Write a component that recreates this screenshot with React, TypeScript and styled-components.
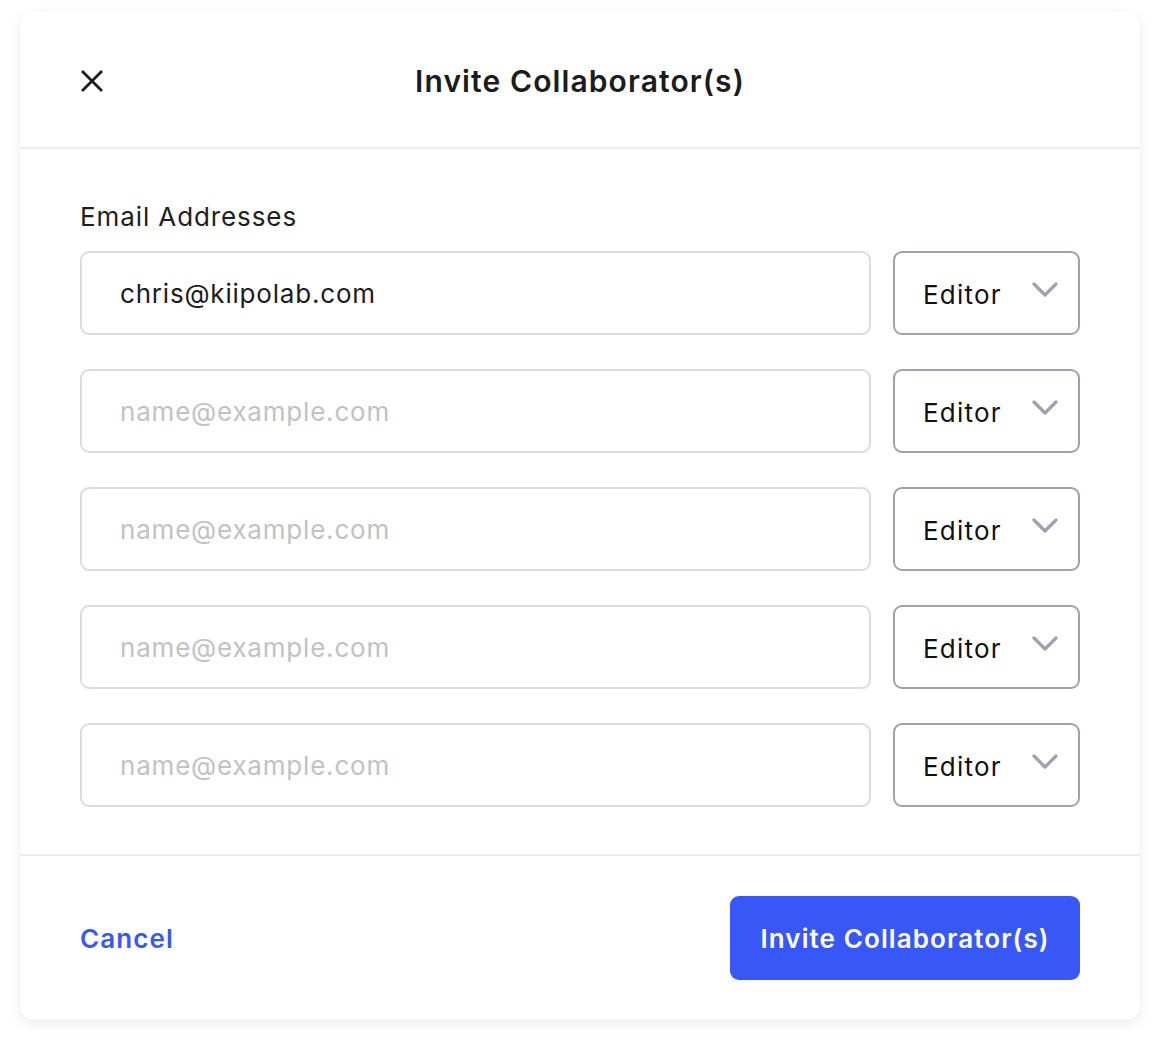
import React from "react";
import styled, { createGlobalStyle } from "styled-components";

const GlobalStyle = createGlobalStyle`
  html, body {
    margin: 0;
    padding: 0;
    background: #ffffff;
    font-family: "Inter", "Noto Sans", sans-serif;
  }
  * { box-sizing: border-box; }
`;

const Page = styled.div`
  width: 1160px;
  padding: 12px 20px 28px 20px;
`;

const Modal = styled.div`
  width: 1120px;
  background: #fff;
  border-radius: 14px;
  box-shadow: 0 4px 14px rgba(0, 0, 0, 0.07), 0 0 2px rgba(0, 0, 0, 0.04);
  display: flex;
  flex-direction: column;
`;

const Header = styled.div`
  height: 137px;
  display: flex;
  align-items: center;
  justify-content: center;
  position: relative;
  border-bottom: 2px solid #ececec;
`;

const CloseButton = styled.button`
  position: absolute;
  left: 60px;
  top: 57px;
  width: 24px;
  height: 24px;
  padding: 0;
  border: none;
  background: none;
  cursor: pointer;
  display: flex;
  align-items: center;
  justify-content: center;
`;

const Title = styled.h1`
  margin: 0 0 -2px 0;
  font-size: 30px;
  font-weight: 600;
  color: #1c1c1c;
  letter-spacing: 1.1px;
`;

const Body = styled.div`
  padding: 52px 60px 47px 60px;
  display: flex;
  flex-direction: column;
  border-bottom: 2px solid #ececec;
`;

const Label = styled.label`
  font-size: 26px;
  color: #1e1e1e;
  line-height: 32px;
  letter-spacing: 0.9px;
  margin-bottom: 18px;
`;

const Rows = styled.div`
  display: flex;
  flex-direction: column;
  gap: 34px;
`;

const Row = styled.div`
  display: flex;
  gap: 22px;
`;

const EmailInput = styled.input`
  width: 791px;
  height: 84px;
  border: 2px solid #dcdcdc;
  border-radius: 9px;
  padding: 0 38px;
  font-family: inherit;
  font-size: 26px;
  letter-spacing: 0.8px;
  color: #1c1c1c;
  outline: none;

  &::placeholder {
    color: #c2c2c2;
  }
`;

const RoleSelect = styled.button`
  width: 187px;
  height: 84px;
  border: 2px solid #a19fb0;
  border-radius: 9px;
  background: #fff;
  padding: 0 20px 0 28px;
  display: flex;
  align-items: center;
  justify-content: space-between;
  font-family: inherit;
  font-size: 26px;
  letter-spacing: 1.2px;
  color: #111;
  cursor: pointer;

  span {
    margin-top: 2px;
  }

  svg {
    margin-top: -6px;
  }
`;

const Footer = styled.div`
  height: 164px;
  padding: 0 60px;
  display: flex;
  align-items: center;
  justify-content: space-between;
`;

const CancelLink = styled.button`
  border: none;
  background: none;
  padding: 0;
  font-family: inherit;
  font-size: 26px;
  font-weight: 600;
  letter-spacing: 1.1px;
  color: #3758f4;
  cursor: pointer;
`;

const PrimaryButton = styled.button`
  width: 350px;
  height: 84px;
  border: none;
  border-radius: 9px;
  background: #3758f6;
  color: #fff;
  font-family: inherit;
  font-size: 26px;
  font-weight: 600;
  letter-spacing: 1.1px;
  cursor: pointer;
`;

const CloseIcon = () => (
  <svg width="24" height="24" viewBox="0 0 24 24" fill="none">
    <path d="M2 2L22 22M22 2L2 22" stroke="#1c1c1c" strokeWidth="2.8" />
  </svg>
);

const Chevron = () => (
  <svg width="26" height="16" viewBox="0 0 26 16" fill="none">
    <path
      d="M2 2L13 13L24 2"
      stroke="#a19fb0"
      strokeWidth="3.2"
      strokeLinecap="round"
      strokeLinejoin="round"
    />
  </svg>
);

const emails = ["chris@kiipolab.com", "", "", "", ""];

const App = () => (
  <>
    <GlobalStyle />
    <Page>
      <Modal>
        <Header>
          <CloseButton aria-label="Close">
            <CloseIcon />
          </CloseButton>
          <Title>Invite Collaborator(s)</Title>
        </Header>
        <Body>
          <Label>Email Addresses</Label>
          <Rows>
            {emails.map((email, idx) => (
              <Row key={idx}>
                <EmailInput
                  defaultValue={email}
                  placeholder="name@example.com"
                />
                <RoleSelect>
                  <span>Editor</span>
                  <Chevron />
                </RoleSelect>
              </Row>
            ))}
          </Rows>
        </Body>
        <Footer>
          <CancelLink>Cancel</CancelLink>
          <PrimaryButton>Invite Collaborator(s)</PrimaryButton>
        </Footer>
      </Modal>
    </Page>
  </>
);

export default App;
